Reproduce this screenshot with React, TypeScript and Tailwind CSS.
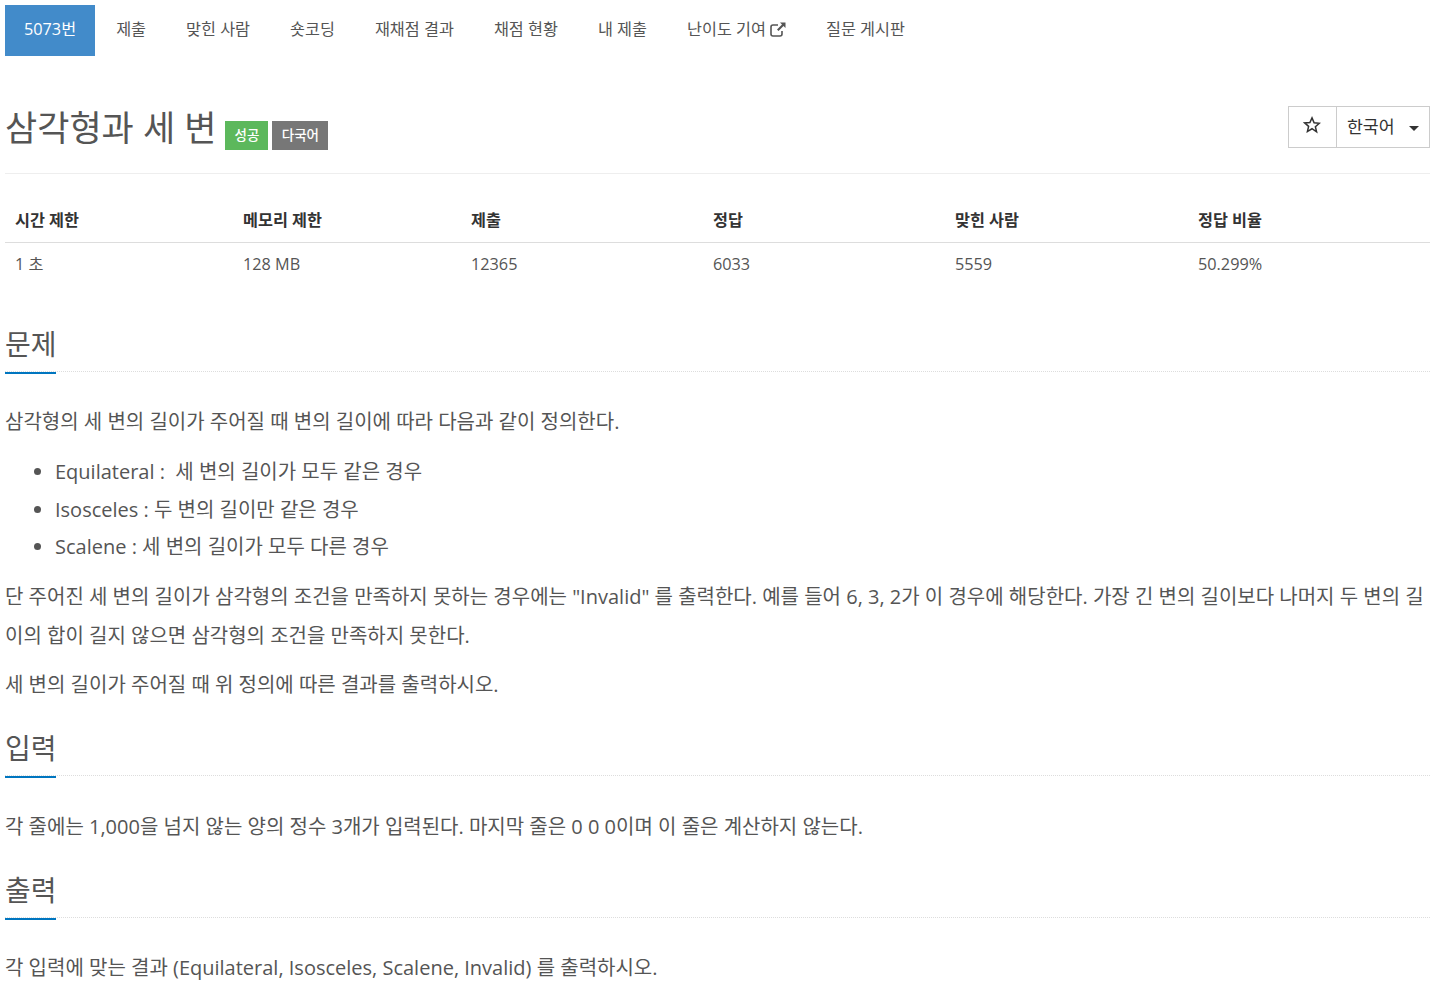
const FONT = "font-['Open_Sans','Noto_Sans_CJK_KR',sans-serif]";

const tabs = ["제출", "맞힌 사람", "숏코딩", "재채점 결과", "채점 현황", "내 제출"];

const columns = [
  { head: "시간 제한", value: "1 초", width: "w-[228px]" },
  { head: "메모리 제한", value: "128 MB", width: "w-[228px]" },
  { head: "제출", value: "12365", width: "w-[242px]" },
  { head: "정답", value: "6033", width: "w-[242px]" },
  { head: "맞힌 사람", value: "5559", width: "w-[243px]" },
  { head: "정답 비율", value: "50.299%", width: "flex-1" },
];

function SectionHead({ title, className }: { title: string; className: string }) {
  return (
    <div className={`${className} border-b border-dotted border-[#dddddd] relative h-[45px]`}>
      <h2 className="text-[28px] leading-[33px] pt-[1px] text-[#555555] font-normal">{title}</h2>
      <div className="absolute left-0 bottom-[-3px] w-[51px] h-[2px] bg-[#0076c0]" />
    </div>
  );
}

function Para({ children, className = "" }: { children: React.ReactNode; className?: string }) {
  return <p className={`text-[20px] leading-[39px] text-[#555555] ${className}`}>{children}</p>;
}

export default function App() {
  return (
    <div className={`${FONT} bg-white pl-[5px] pr-[20px] pt-[5px] h-[982px] overflow-hidden`}>
      <ul className="flex text-[16.25px] text-[#555555] h-[51px]">
        <li className="bg-[#428bca] text-white px-[19px] mr-[1px] flex items-center pb-[2px]">5073번</li>
        {tabs.map((t) => (
          <li key={t} className="px-[20px] flex items-center pb-[2px]">{t}</li>
        ))}
        <li className="px-[20px] flex items-center gap-[4px] pb-[2px]">
          난이도 기여
          <svg width="16" height="15" viewBox="0 0 16 15" fill="none" className="mt-[-1px]">
            <path d="M8 3H3a2 2 0 0 0-2 2v7a2 2 0 0 0 2 2h7a2 2 0 0 0 2-2V9" stroke="#555555" strokeWidth="1.6" />
            <path d="M10 0.5h5.5V6l-2-2-5 5-1.5-1.5 5-5z" fill="#555555" />
          </svg>
        </li>
        <li className="px-[20px] flex items-center pb-[2px]">질문 게시판</li>
      </ul>

      <div className="mt-[50px] pb-[22px] border-b border-[#eeeeee] flex justify-between items-start h-[68px]">
        <div className="flex items-start">
          <h1 className="text-[35px] leading-[40px] text-[#555555] font-normal pt-[2px]">삼각형과 세 변</h1>
          <span className="ml-[9px] mt-[15px] bg-[#5cb85c] text-white text-[13.5px] font-medium h-[29px] w-[43px] flex items-center justify-center">성공</span>
          <span className="ml-[4px] mt-[15px] bg-[#777777] text-white text-[13.5px] font-medium h-[29px] w-[56px] flex items-center justify-center">다국어</span>
        </div>
        <div className="flex border border-[#cccccc] h-[42px] text-[#333333]">
          <div className="w-[48px] flex items-center justify-center border-r border-[#cccccc] pb-[4px] pr-[1px]">
            <svg width="18" height="18" viewBox="0 0 24 24" fill="none" stroke="#333" strokeWidth="2"><path d="M12 2.500l2.800 6.600 7 .6-5.300 4.600 1.600 6.900L12 17l-6.100 3.700 1.600-6.900-5.300-4.600 7-.6z" /></svg>
          </div>
          <div className="w-[92px] flex items-center pl-[10px] text-[17.25px] relative">
            한국어
            <span className="absolute right-[10px] top-[19px] w-0 h-0 border-x-[5px] border-x-transparent border-t-[5px] border-t-[#333333]" />
          </div>
        </div>
      </div>

      <div className="mt-[20px] flex">
        {columns.map((c) => (
          <div key={c.head} className={c.width}>
            <div className="h-[49px] border-b border-[#dddddd] px-[10px] pt-[5px] flex items-center text-[16.25px] font-bold text-[#333333]">{c.head}</div>
            <div className="h-[43px] px-[10px] flex items-center text-[16.25px] text-[#555555]">{c.value}</div>
          </div>
        ))}
      </div>

      <SectionHead title="문제" className="mt-[41px]" />
      <div className="mt-[30px]">
        <Para>삼각형의 세 변의 길이가 주어질 때 변의 길이에 따라 다음과 같이 정의한다.</Para>
        <ul className="list-disc pl-[50px] mt-[12px] text-[20px] leading-[37.5px] text-[#555555]">
          <li>Equilateral :&nbsp; 세 변의 길이가 모두 같은 경우</li>
          <li>Isosceles : 두 변의 길이만 같은 경우</li>
          <li>Scalene : 세 변의 길이가 모두 다른 경우</li>
        </ul>
        <Para className="mt-[11px]">단 주어진 세 변의 길이가 삼각형의 조건을 만족하지 못하는 경우에는 "Invalid" 를 출력한다. 예를 들어 6, 3, 2가 이 경우에 해당한다. 가장 긴 변의 길이보다 나머지 두 변의 길이의 합이 길지 않으면 삼각형의 조건을 만족하지 못한다.</Para>
        <Para className="mt-[10px]">세 변의 길이가 주어질 때 위 정의에 따른 결과를 출력하시오.</Para>
      </div>

      <SectionHead title="입력" className="mt-[27px]" />
      <Para className="mt-[31px]">각 줄에는 1,000을 넘지 않는 양의 정수 3개가 입력된다. 마지막 줄은 0 0 0이며 이 줄은 계산하지 않는다.</Para>

      <SectionHead title="출력" className="mt-[27px]" />
      <Para className="mt-[30px]">각 입력에 맞는 결과 (Equilateral, Isosceles, Scalene, Invalid) 를 출력하시오.</Para>
    </div>
  );
}
